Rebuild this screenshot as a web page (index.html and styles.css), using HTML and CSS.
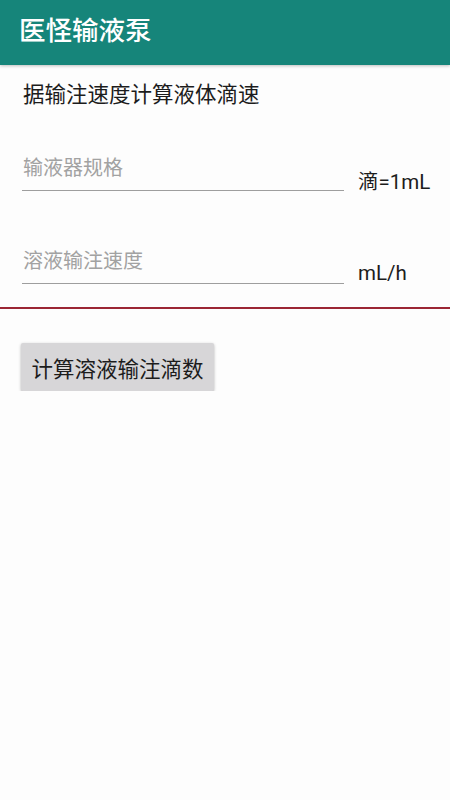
FILE: index.html
```html
<!DOCTYPE html>
<html lang="zh-CN">
<head>
<meta charset="utf-8">
<title>医怪输液泵</title>
<link rel="stylesheet" href="styles.css">
</head>
<body>
<header class="appbar"><h1 class="appbar-title">医怪输液泵</h1></header>
<main class="content">
  <p class="intro">据输注速度计算液体滴速</p>
  <div class="field field-first">
    <div class="input"><span class="placeholder">输液器规格</span></div>
    <span class="unit unit-first">滴=1mL</span>
  </div>
  <div class="field field-second">
    <div class="input"><span class="placeholder">溶液输注速度</span></div>
    <span class="unit unit-second">mL/h</span>
  </div>
</main>
<div class="divider"></div>
<div class="actions">
  <button class="btn" type="button">计算溶液输注滴数</button>
</div>
</body>
</html>
```
FILE: styles.css
```css
html, body {
  margin: 0;
  padding: 0;
  background: #fdfdfd;
  font-family: "Noto Sans CJK SC", "Noto Sans", Roboto, sans-serif;
  color: #1c1c1c;
}
.appbar {
  height: 65px;
  background: #16857a;
  display: flex;
  align-items: center;
  padding-left: 19px;
  box-shadow: 0 1px 3px rgba(0,0,0,0.25);
  position: relative;
}
.appbar-title {
  margin: 0;
  color: #ffffff;
  font-size: 26.5px;
  font-weight: 500;
  line-height: 30px;
  margin-top: -7px;
}
.content {
  padding: 0 22px;
}
.intro {
  margin: 13px 0 0 1px;
  font-size: 21.5px;
  line-height: 30px;
}
.field {
  display: flex;
  align-items: flex-start;
  height: 36px;
}
.field-first { margin-top: 47px; }
.field-second { margin-top: 57px; }
.input {
  width: 322px;
  height: 36px;
  box-sizing: border-box;
  border-bottom: 1px solid #9e9e9e;
  line-height: 24px;
  padding-left: 1px;
  flex: none;
}
.placeholder {
  font-size: 20px;
  color: #a2a2a2;
}
.unit {
  margin-left: 14px;
  font-family: Roboto, "Noto Sans CJK SC", sans-serif;
  font-size: 20.5px;
  line-height: 24px;
  color: #1c1c1c;
  white-space: nowrap;
}
.unit-first { margin-top: 15px; }
.unit-second { margin-top: 13px; }
.divider {
  margin-top: 23px;
  height: 2px;
  background: #9b2634;
}
.actions {
  padding: 34px 0 0 21px;
}
.btn {
  width: 193px;
  height: 48px;
  border: none;
  border-radius: 2px;
  background: #d7d6d8;
  box-shadow: 0 1px 3px rgba(0,0,0,0.3);
  font-family: "Noto Sans CJK SC", "Noto Sans", sans-serif;
  font-size: 21.5px;
  color: #1c1c1c;
  padding: 0;
}
```
